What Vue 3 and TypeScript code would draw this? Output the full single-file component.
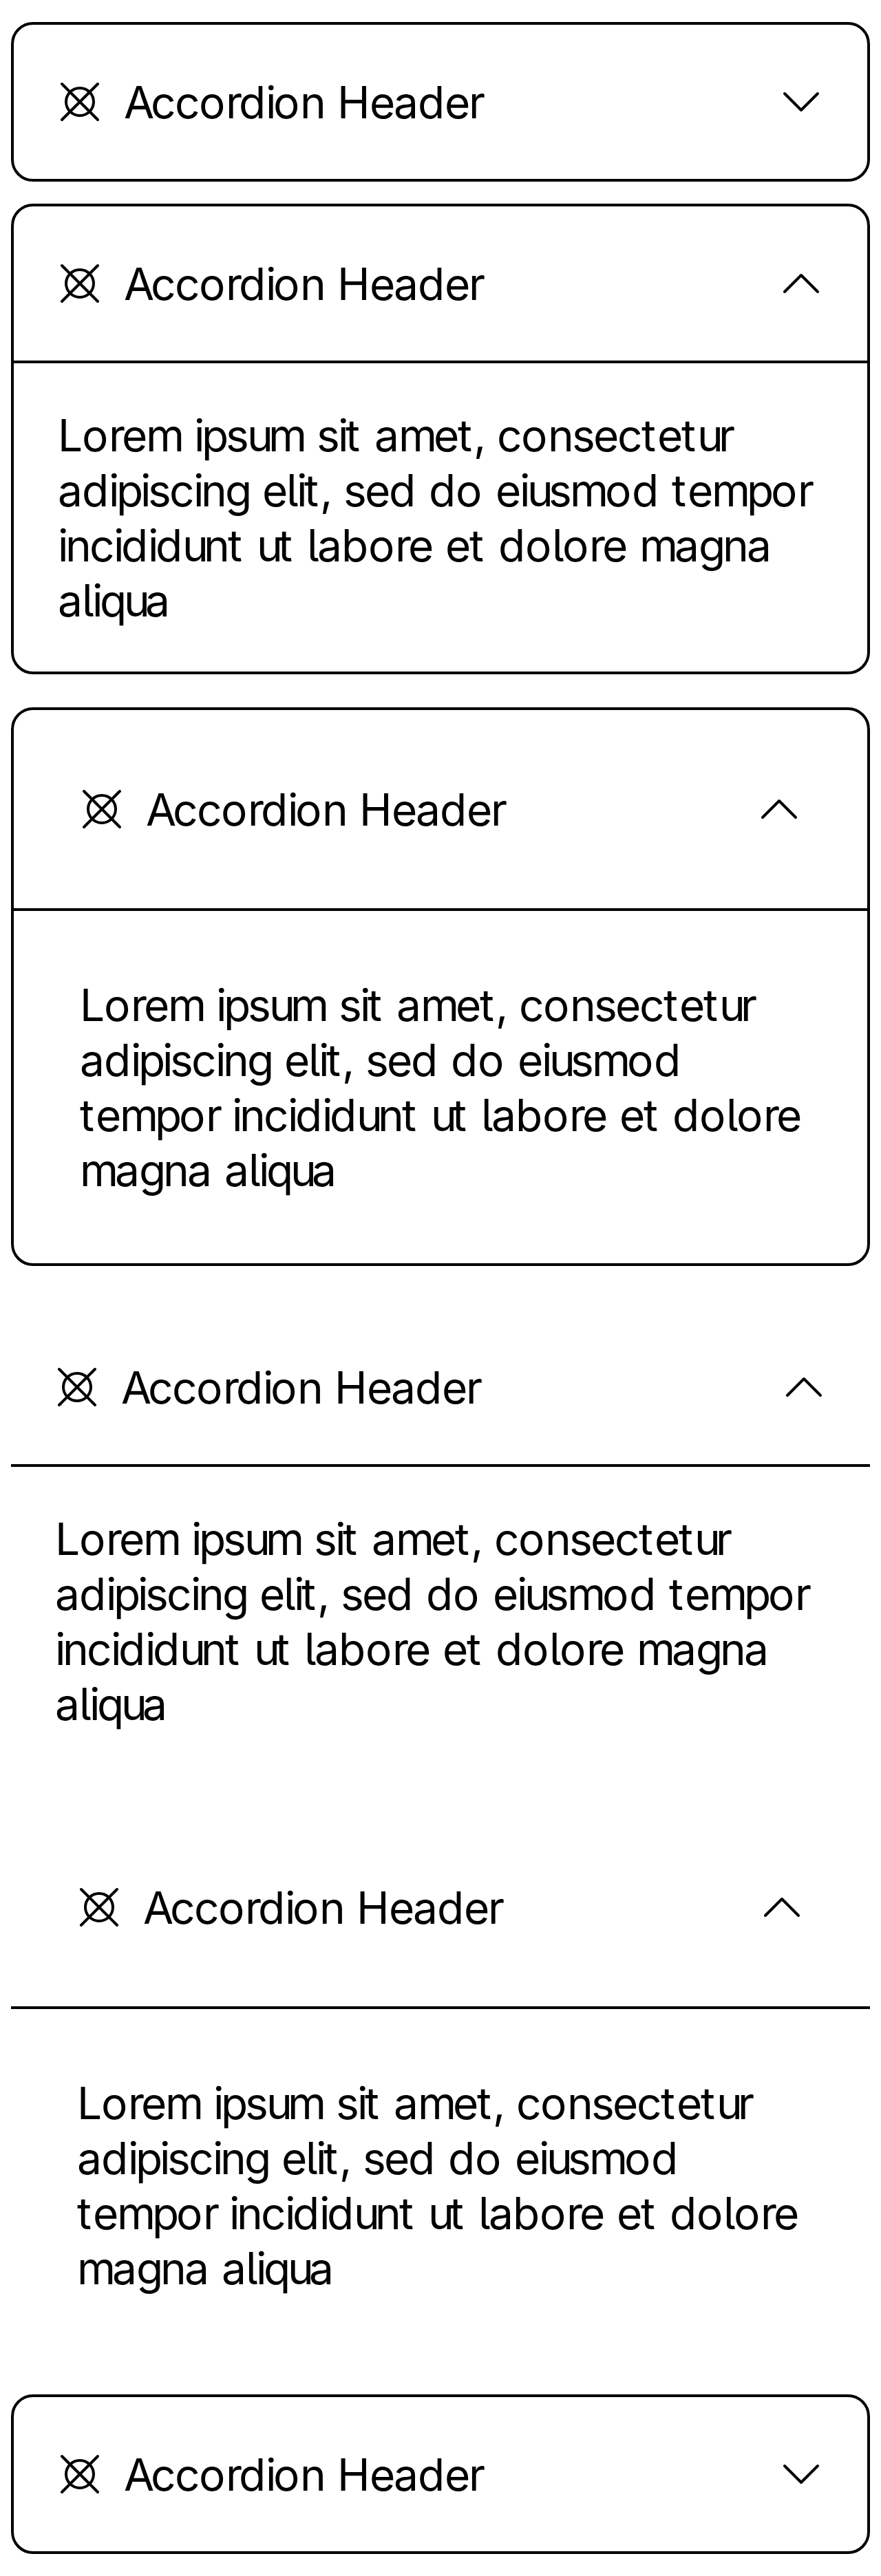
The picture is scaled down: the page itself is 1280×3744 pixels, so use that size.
<script setup lang="ts">
interface Item { variant: string; open: boolean; lines: string[] }
const compact = ['Lorem ipsum sit amet, consectetur', 'adipiscing elit, sed do eiusmod tempor', 'incididunt ut labore et dolore magna', 'aliqua']
const roomy = ['Lorem ipsum sit amet, consectetur', 'adipiscing elit, sed do eiusmod', 'tempor incididunt ut labore et dolore', 'magna aliqua']
const items: Item[] = [
  { variant: 'first', open: false, lines: [] },
  { variant: 'second', open: true, lines: compact },
  { variant: 'third roomy', open: true, lines: roomy },
  { variant: 'fourth flat', open: true, lines: compact },
  { variant: 'fifth flat roomy', open: true, lines: roomy },
  { variant: 'sixth', open: false, lines: [] },
]

// Glyph advances on a 4px grid, tightened by a fixed tracking.
const UNIT = 4
const TRACKING = -1
const advances: Record<string, number> = {
  A: 10, H: 12, L: 9, a: 9, b: 10, c: 9, d: 10, e: 9, g: 9, i: 3, l: 4, m: 13,
  n: 9, o: 10, p: 9, q: 9, r: 5, s: 8, t: 6, u: 8, ',': 4, ' ': 5,
}
function positions(text: string): string {
  let x = 0
  return [...text].map((ch) => {
    const at = x
    x += (advances[ch] ?? 9) * UNIT + TRACKING
    return at
  }).join(' ')
}
</script>

<template>
  <main class="page">
    <section v-for="(item, i) in items" :key="i" class="accordion" :class="item.variant">
      <header class="head">
        <svg class="mark" viewBox="0 0 16 16"><circle cx="8" cy="8" r="5" /><path d="M1.5 1.5 14.5 14.5M14.5 1.5 1.5 14.5" /></svg>
        <svg class="line title"><text :x="positions('Accordion Header')" y="64">Accordion Header</text></svg>
        <svg class="chevron" viewBox="0 0 16 16"><path :d="item.open ? 'M2 11 8 5 14 11' : 'M2 5 8 11 14 5'" /></svg>
      </header>
      <div v-if="item.open" class="body">
        <svg v-for="line in item.lines" :key="line" class="line"><text :x="positions(line)" y="64">{{ line }}</text></svg>
      </div>
    </section>
  </main>
</template>

<style>
body { background: #fff; }
</style>
<style scoped>
.page { box-sizing: border-box; width: 1280px; height: 3744px; padding: 32px 16px; font-family: Inter, sans-serif; font-size: 64px; line-height: 80px; font-feature-settings: "cv05"; color: #000; overflow: hidden; }
.accordion { box-sizing: border-box; width: 1248px; border: 4px solid #000; border-radius: 32px; }
.head { box-sizing: border-box; height: 224px; padding: 0 64px; display: flex; align-items: center; }
.mark, .chevron { width: 64px; height: 64px; flex: none; fill: none; stroke: #000; stroke-width: 1; stroke-linecap: round; stroke-linejoin: round; }
.line { display: block; width: 100%; height: 80px; overflow: visible; fill: currentColor; }
.title { margin-left: 32px; flex: 1; min-width: 0; }
.body { border-top: 4px solid #000; padding: 64px; }
.second { margin-top: 32px; }
.third { margin-top: 48px; }
.roomy .head { height: 288px; padding: 0 96px; }
.roomy .body { padding: 96px; }
.flat { border: 0; border-radius: 0; }
.fourth { margin-top: 64px; }
.fifth { margin-top: 48px; }
.sixth { margin-top: 48px; }
</style>
